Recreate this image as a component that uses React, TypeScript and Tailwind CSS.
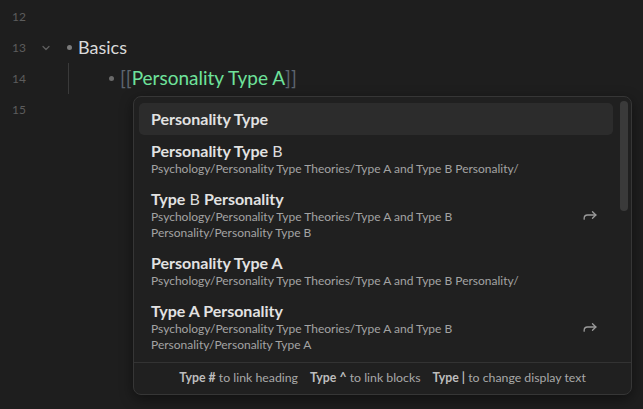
import React from 'react';

type Part = { t: string; b?: boolean };

const items: { title: Part[]; path?: string; selected?: boolean; arrow?: boolean }[] = [
    { title: [{ t: 'Personality Type', b: true }], selected: true },
    {
        title: [{ t: 'Personality Type', b: true }, { t: ' B' }],
        path: 'Psychology/Personality Type Theories/Type A and Type B Personality/',
    },
    {
        title: [{ t: 'Type', b: true }, { t: ' B ' }, { t: 'Personality', b: true }],
        path: 'Psychology/Personality Type Theories/Type A and Type B Personality/Personality Type B',
        arrow: true,
    },
    {
        title: [{ t: 'Personality Type A', b: true }],
        path: 'Psychology/Personality Type Theories/Type A and Type B Personality/',
    },
    {
        title: [{ t: 'Type A Personality', b: true }],
        path: 'Psychology/Personality Type Theories/Type A and Type B Personality/Personality Type A',
        arrow: true,
    },
];

const hints = [
    { cmd: 'Type #', text: 'to link heading' },
    { cmd: 'Type ^', text: 'to link blocks' },
    { cmd: 'Type |', text: 'to change display text' },
];

const ForwardIcon = () => (
    <svg width="20" height="20" viewBox="0 0 24 24" fill="none" stroke="currentColor" strokeWidth="1.6" strokeLinecap="round" strokeLinejoin="round" className="shrink-0">
        <polyline points="15 16 19 12 15 8" />
        <path d="M5 17v-1a4 4 0 0 1 4-4h10" />
    </svg>
);

const App = () => {
    return (
        <div className="relative w-[643px] h-[409px] bg-[#1e1e1e] overflow-hidden font-['Lato','Liberation_Sans',sans-serif]">
            {/* Editor lines */}
            <div className="pt-[1px]">
                <div className="flex items-center h-[31px]">
                    <span className="w-[40px] pl-[12px] text-[12px] text-[#5c5c5c]">12</span>
                </div>
                <div className="flex items-center h-[31px]">
                    <span className="w-[40px] pl-[12px] text-[12px] text-[#5c5c5c]">13</span>
                    <svg width="12" height="12" viewBox="0 0 24 24" fill="none" stroke="#5f5f5f" strokeWidth="2.5" strokeLinecap="round" strokeLinejoin="round" className="mr-[15px]">
                        <polyline points="6 9 12 15 18 9" />
                    </svg>
                    <span className="w-[5px] h-[5px] rounded-full bg-[#7a7a7a] mr-[6px]" />
                    <span className="text-[18px] text-[#dadada]">Basics</span>
                </div>
                <div className="flex items-center h-[31px]">
                    <span className="w-[40px] pl-[12px] text-[12px] text-[#5c5c5c]">14</span>
                    <span className="w-[1px] h-[31px] bg-[#3a3a3a] ml-[28px] mr-[40px]" />
                    <span className="w-[5px] h-[5px] rounded-full bg-[#6a6a6a] mr-[6px]" />
                    <span className="text-[19px] text-[#5e6670]">[[</span>
                    <span className="text-[19px] text-[#6ee29b]">Personality Type A</span>
                    <span className="text-[19px] text-[#5e6670]">]]</span>
                </div>
                <div className="flex items-center h-[31px]">
                    <span className="w-[40px] pl-[12px] text-[12px] text-[#5c5c5c]">15</span>
                </div>
            </div>

            {/* Suggestion popup */}
            <div className="absolute left-[133px] top-[96px] w-[499px] h-[299px] bg-[#202020] border border-[#363636] rounded-[8px] shadow-[0_4px_14px_rgba(0,0,0,0.45)] flex flex-col">
                <div className="relative flex-1 pl-[5px] pr-[18px] pt-[6px] overflow-hidden">
                    {items.map((item, i) => (
                        <div
                            key={i}
                            className={`flex items-center rounded-[5px] pl-[12px] pr-[13px] py-[6px] ${item.selected ? 'bg-[#2c2c2c]' : ''}`}
                        >
                            <div className="flex-1 pr-[40px]">
                                <div className="text-[16px] leading-[20px] text-[#dcdcdc]">
                                    {item.title.map((p, j) => (
                                        <span key={j} className={p.b ? 'font-bold text-[#e2e2e2]' : 'font-normal'}>
                                            {p.t}
                                        </span>
                                    ))}
                                </div>
                                {item.path && (
                                    <div className="text-[12px] leading-[16px] text-[#a3a3a3]">{item.path}</div>
                                )}
                            </div>
                            {item.arrow && (
                                <span className="text-[#9a9a9a] flex">
                                    <ForwardIcon />
                                </span>
                            )}
                        </div>
                    ))}
                    {/* Scrollbar */}
                    <div className="absolute right-[3px] top-[4px] w-[8px] h-[110px] rounded-full bg-[#3a3a3a]" />
                </div>
                <div className="h-[32px] border-t border-[#333333] flex items-center justify-center gap-[12px] text-[12.3px] text-[#a8a8a8]">
                    {hints.map((h) => (
                        <span key={h.cmd}>
                            <span className="font-bold text-[#bdbdbd]">{h.cmd}</span> {h.text}
                        </span>
                    ))}
                </div>
            </div>
        </div>
    );
};

export default App;
